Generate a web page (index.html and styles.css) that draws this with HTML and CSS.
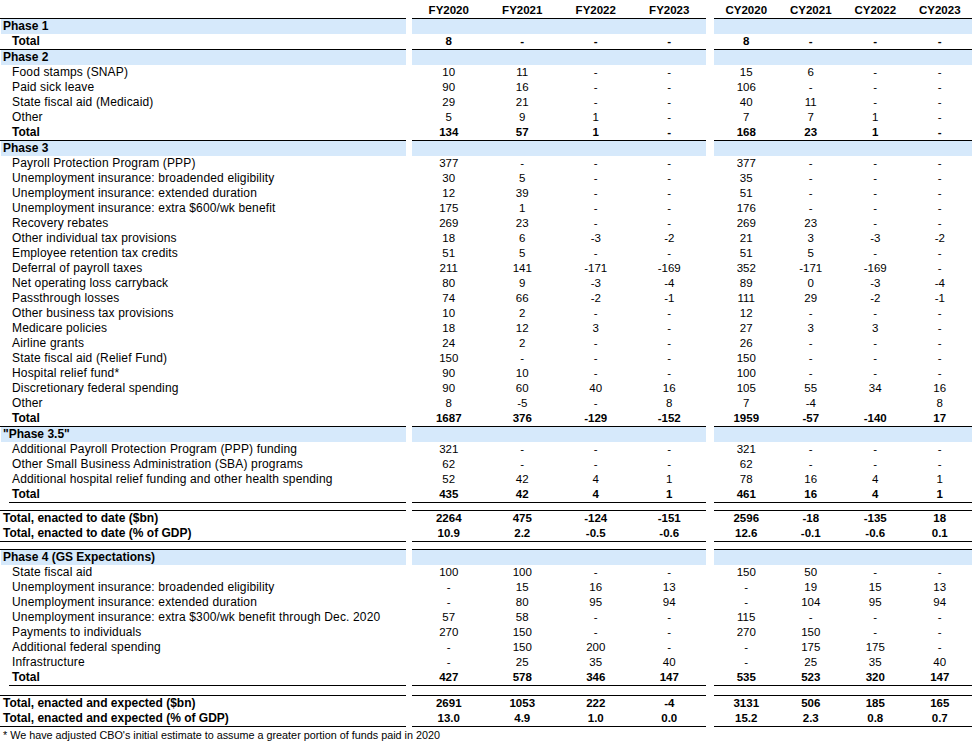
FILE: index.html
```html
<!DOCTYPE html>
<html>
<head>
<meta charset="utf-8">
<link rel="stylesheet" href="styles.css">
</head>
<body>
<table class="fiscal">
  <colgroup>
    <col class="c-ind"><col class="c-lbl"><col class="c-gap1">
    <col class="c-fy"><col class="c-fy"><col class="c-fy"><col class="c-fy">
    <col class="c-gap2">
    <col class="c-cy"><col class="c-cy"><col class="c-cy"><col class="c-cy">
  </colgroup>
  <thead>
    <tr class="head">
      <td class="ind nb"></td><td class="lbl nb"></td><td class="g"></td>
      <td class="n">FY2020</td><td class="n">FY2021</td><td class="n">FY2022</td><td class="n">FY2023</td>
      <td class="g"></td>
      <td class="n">CY2020</td><td class="n">CY2021</td><td class="n">CY2022</td><td class="n">CY2023</td>
    </tr>
  </thead>
  <tbody>
    <tr class="ph first"><td class="phl" colspan="2">Phase 1</td><td class="g"></td><td class="n"></td><td class="n"></td><td class="n"></td><td class="n"></td><td class="g"></td><td class="n"></td><td class="n"></td><td class="n"></td><td class="n"></td></tr>
    <tr class="tot"><td class="ind"></td><td class="lbl">Total</td><td class="g"></td><td class="n">8</td><td class="n">-</td><td class="n">-</td><td class="n">-</td><td class="g"></td><td class="n">8</td><td class="n">-</td><td class="n">-</td><td class="n">-</td></tr>

    <tr class="ph"><td class="phl" colspan="2">Phase 2</td><td class="g"></td><td class="n"></td><td class="n"></td><td class="n"></td><td class="n"></td><td class="g"></td><td class="n"></td><td class="n"></td><td class="n"></td><td class="n"></td></tr>
    <tr><td class="ind"></td><td class="lbl">Food stamps (SNAP)</td><td class="g"></td><td class="n">10</td><td class="n">11</td><td class="n">-</td><td class="n">-</td><td class="g"></td><td class="n">15</td><td class="n">6</td><td class="n">-</td><td class="n">-</td></tr>
    <tr><td class="ind"></td><td class="lbl">Paid sick leave</td><td class="g"></td><td class="n">90</td><td class="n">16</td><td class="n">-</td><td class="n">-</td><td class="g"></td><td class="n">106</td><td class="n">-</td><td class="n">-</td><td class="n">-</td></tr>
    <tr><td class="ind"></td><td class="lbl">State fiscal aid (Medicaid)</td><td class="g"></td><td class="n">29</td><td class="n">21</td><td class="n">-</td><td class="n">-</td><td class="g"></td><td class="n">40</td><td class="n">11</td><td class="n">-</td><td class="n">-</td></tr>
    <tr><td class="ind"></td><td class="lbl">Other</td><td class="g"></td><td class="n">5</td><td class="n">9</td><td class="n">1</td><td class="n">-</td><td class="g"></td><td class="n">7</td><td class="n">7</td><td class="n">1</td><td class="n">-</td></tr>
    <tr class="tot"><td class="ind"></td><td class="lbl">Total</td><td class="g"></td><td class="n">134</td><td class="n">57</td><td class="n">1</td><td class="n">-</td><td class="g"></td><td class="n">168</td><td class="n">23</td><td class="n">1</td><td class="n">-</td></tr>

    <tr class="ph"><td class="phl" colspan="2">Phase 3</td><td class="g"></td><td class="n"></td><td class="n"></td><td class="n"></td><td class="n"></td><td class="g"></td><td class="n"></td><td class="n"></td><td class="n"></td><td class="n"></td></tr>
    <tr><td class="ind"></td><td class="lbl">Payroll Protection Program (PPP)</td><td class="g"></td><td class="n">377</td><td class="n">-</td><td class="n">-</td><td class="n">-</td><td class="g"></td><td class="n">377</td><td class="n">-</td><td class="n">-</td><td class="n">-</td></tr>
    <tr><td class="ind"></td><td class="lbl">Unemployment insurance: broadended eligibility</td><td class="g"></td><td class="n">30</td><td class="n">5</td><td class="n">-</td><td class="n">-</td><td class="g"></td><td class="n">35</td><td class="n">-</td><td class="n">-</td><td class="n">-</td></tr>
    <tr><td class="ind"></td><td class="lbl">Unemployment insurance: extended duration</td><td class="g"></td><td class="n">12</td><td class="n">39</td><td class="n">-</td><td class="n">-</td><td class="g"></td><td class="n">51</td><td class="n">-</td><td class="n">-</td><td class="n">-</td></tr>
    <tr><td class="ind"></td><td class="lbl">Unemployment insurance: extra $600/wk benefit</td><td class="g"></td><td class="n">175</td><td class="n">1</td><td class="n">-</td><td class="n">-</td><td class="g"></td><td class="n">176</td><td class="n">-</td><td class="n">-</td><td class="n">-</td></tr>
    <tr><td class="ind"></td><td class="lbl">Recovery rebates</td><td class="g"></td><td class="n">269</td><td class="n">23</td><td class="n">-</td><td class="n">-</td><td class="g"></td><td class="n">269</td><td class="n">23</td><td class="n">-</td><td class="n">-</td></tr>
    <tr><td class="ind"></td><td class="lbl">Other individual tax provisions</td><td class="g"></td><td class="n">18</td><td class="n">6</td><td class="n">-3</td><td class="n">-2</td><td class="g"></td><td class="n">21</td><td class="n">3</td><td class="n">-3</td><td class="n">-2</td></tr>
    <tr><td class="ind"></td><td class="lbl">Employee retention tax credits</td><td class="g"></td><td class="n">51</td><td class="n">5</td><td class="n">-</td><td class="n">-</td><td class="g"></td><td class="n">51</td><td class="n">5</td><td class="n">-</td><td class="n">-</td></tr>
    <tr><td class="ind"></td><td class="lbl">Deferral of payroll taxes</td><td class="g"></td><td class="n">211</td><td class="n">141</td><td class="n">-171</td><td class="n">-169</td><td class="g"></td><td class="n">352</td><td class="n">-171</td><td class="n">-169</td><td class="n">-</td></tr>
    <tr><td class="ind"></td><td class="lbl">Net operating loss carryback</td><td class="g"></td><td class="n">80</td><td class="n">9</td><td class="n">-3</td><td class="n">-4</td><td class="g"></td><td class="n">89</td><td class="n">0</td><td class="n">-3</td><td class="n">-4</td></tr>
    <tr><td class="ind"></td><td class="lbl">Passthrough losses</td><td class="g"></td><td class="n">74</td><td class="n">66</td><td class="n">-2</td><td class="n">-1</td><td class="g"></td><td class="n">111</td><td class="n">29</td><td class="n">-2</td><td class="n">-1</td></tr>
    <tr><td class="ind"></td><td class="lbl">Other business tax provisions</td><td class="g"></td><td class="n">10</td><td class="n">2</td><td class="n">-</td><td class="n">-</td><td class="g"></td><td class="n">12</td><td class="n">-</td><td class="n">-</td><td class="n">-</td></tr>
    <tr><td class="ind"></td><td class="lbl">Medicare policies</td><td class="g"></td><td class="n">18</td><td class="n">12</td><td class="n">3</td><td class="n">-</td><td class="g"></td><td class="n">27</td><td class="n">3</td><td class="n">3</td><td class="n">-</td></tr>
    <tr><td class="ind"></td><td class="lbl">Airline grants</td><td class="g"></td><td class="n">24</td><td class="n">2</td><td class="n">-</td><td class="n">-</td><td class="g"></td><td class="n">26</td><td class="n">-</td><td class="n">-</td><td class="n">-</td></tr>
    <tr><td class="ind"></td><td class="lbl">State fiscal aid (Relief Fund)</td><td class="g"></td><td class="n">150</td><td class="n">-</td><td class="n">-</td><td class="n">-</td><td class="g"></td><td class="n">150</td><td class="n">-</td><td class="n">-</td><td class="n">-</td></tr>
    <tr><td class="ind"></td><td class="lbl">Hospital relief fund*</td><td class="g"></td><td class="n">90</td><td class="n">10</td><td class="n">-</td><td class="n">-</td><td class="g"></td><td class="n">100</td><td class="n">-</td><td class="n">-</td><td class="n">-</td></tr>
    <tr><td class="ind"></td><td class="lbl">Discretionary federal spending</td><td class="g"></td><td class="n">90</td><td class="n">60</td><td class="n">40</td><td class="n">16</td><td class="g"></td><td class="n">105</td><td class="n">55</td><td class="n">34</td><td class="n">16</td></tr>
    <tr><td class="ind"></td><td class="lbl">Other</td><td class="g"></td><td class="n">8</td><td class="n">-5</td><td class="n">-</td><td class="n">8</td><td class="g"></td><td class="n">7</td><td class="n">-4</td><td class="n"></td><td class="n">8</td></tr>
    <tr class="tot"><td class="ind"></td><td class="lbl">Total</td><td class="g"></td><td class="n">1687</td><td class="n">376</td><td class="n">-129</td><td class="n">-152</td><td class="g"></td><td class="n">1959</td><td class="n">-57</td><td class="n">-140</td><td class="n">17</td></tr>

    <tr class="ph"><td class="phl" colspan="2">"Phase 3.5"</td><td class="g"></td><td class="n"></td><td class="n"></td><td class="n"></td><td class="n"></td><td class="g"></td><td class="n"></td><td class="n"></td><td class="n"></td><td class="n"></td></tr>
    <tr><td class="ind"></td><td class="lbl">Additional Payroll Protection Program (PPP) funding</td><td class="g"></td><td class="n">321</td><td class="n">-</td><td class="n">-</td><td class="n">-</td><td class="g"></td><td class="n">321</td><td class="n">-</td><td class="n">-</td><td class="n">-</td></tr>
    <tr><td class="ind"></td><td class="lbl">Other Small Business Administration (SBA) programs</td><td class="g"></td><td class="n">62</td><td class="n">-</td><td class="n">-</td><td class="n">-</td><td class="g"></td><td class="n">62</td><td class="n">-</td><td class="n">-</td><td class="n">-</td></tr>
    <tr><td class="ind"></td><td class="lbl">Additional hospital relief funding and other health spending</td><td class="g"></td><td class="n">52</td><td class="n">42</td><td class="n">4</td><td class="n">1</td><td class="g"></td><td class="n">78</td><td class="n">16</td><td class="n">4</td><td class="n">1</td></tr>
    <tr class="tot rule-below"><td class="ind"></td><td class="lbl">Total</td><td class="g"></td><td class="n">435</td><td class="n">42</td><td class="n">4</td><td class="n">1</td><td class="g"></td><td class="n">461</td><td class="n">16</td><td class="n">4</td><td class="n">1</td></tr>
    <tr class="sp"><td></td><td></td><td></td><td></td><td></td><td></td><td></td><td></td><td></td><td></td><td></td><td></td></tr>

    <tr class="sum ruled"><td class="phl" colspan="2">Total, enacted to date ($bn)</td><td class="g"></td><td class="n">2264</td><td class="n">475</td><td class="n">-124</td><td class="n">-151</td><td class="g"></td><td class="n">2596</td><td class="n">-18</td><td class="n">-135</td><td class="n">18</td></tr>
    <tr class="sum rule-below"><td class="phl" colspan="2">Total, enacted to date (% of GDP)</td><td class="g"></td><td class="n">10.9</td><td class="n">2.2</td><td class="n">-0.5</td><td class="n">-0.6</td><td class="g"></td><td class="n">12.6</td><td class="n">-0.1</td><td class="n">-0.6</td><td class="n">0.1</td></tr>
    <tr class="sp"><td></td><td></td><td></td><td></td><td></td><td></td><td></td><td></td><td></td><td></td><td></td><td></td></tr>

    <tr class="ph"><td class="phl" colspan="2">Phase 4 (GS Expectations)</td><td class="g"></td><td class="n"></td><td class="n"></td><td class="n"></td><td class="n"></td><td class="g"></td><td class="n"></td><td class="n"></td><td class="n"></td><td class="n"></td></tr>
    <tr><td class="ind"></td><td class="lbl">State fiscal aid</td><td class="g"></td><td class="n">100</td><td class="n">100</td><td class="n">-</td><td class="n">-</td><td class="g"></td><td class="n">150</td><td class="n">50</td><td class="n">-</td><td class="n">-</td></tr>
    <tr><td class="ind"></td><td class="lbl">Unemployment insurance: broadended eligibility</td><td class="g"></td><td class="n">-</td><td class="n">15</td><td class="n">16</td><td class="n">13</td><td class="g"></td><td class="n">-</td><td class="n">19</td><td class="n">15</td><td class="n">13</td></tr>
    <tr><td class="ind"></td><td class="lbl">Unemployment insurance: extended duration</td><td class="g"></td><td class="n">-</td><td class="n">80</td><td class="n">95</td><td class="n">94</td><td class="g"></td><td class="n">-</td><td class="n">104</td><td class="n">95</td><td class="n">94</td></tr>
    <tr><td class="ind"></td><td class="lbl">Unemployment insurance: extra $300/wk benefit through Dec. 2020</td><td class="g"></td><td class="n">57</td><td class="n">58</td><td class="n">-</td><td class="n">-</td><td class="g"></td><td class="n">115</td><td class="n">-</td><td class="n">-</td><td class="n">-</td></tr>
    <tr><td class="ind"></td><td class="lbl">Payments to individuals</td><td class="g"></td><td class="n">270</td><td class="n">150</td><td class="n">-</td><td class="n">-</td><td class="g"></td><td class="n">270</td><td class="n">150</td><td class="n">-</td><td class="n">-</td></tr>
    <tr><td class="ind"></td><td class="lbl">Additional federal spending</td><td class="g"></td><td class="n">-</td><td class="n">150</td><td class="n">200</td><td class="n">-</td><td class="g"></td><td class="n">-</td><td class="n">175</td><td class="n">175</td><td class="n">-</td></tr>
    <tr><td class="ind"></td><td class="lbl">Infrastructure</td><td class="g"></td><td class="n">-</td><td class="n">25</td><td class="n">35</td><td class="n">40</td><td class="g"></td><td class="n">-</td><td class="n">25</td><td class="n">35</td><td class="n">40</td></tr>
    <tr class="tot rule-below"><td class="ind"></td><td class="lbl">Total</td><td class="g"></td><td class="n">427</td><td class="n">578</td><td class="n">346</td><td class="n">147</td><td class="g"></td><td class="n">535</td><td class="n">523</td><td class="n">320</td><td class="n">147</td></tr>
    <tr class="sp sp-tall"><td></td><td></td><td></td><td></td><td></td><td></td><td></td><td></td><td></td><td></td><td></td><td></td></tr>

    <tr class="sum ruled"><td class="phl" colspan="2">Total, enacted and expected ($bn)</td><td class="g"></td><td class="n">2691</td><td class="n">1053</td><td class="n">222</td><td class="n">-4</td><td class="g"></td><td class="n">3131</td><td class="n">506</td><td class="n">185</td><td class="n">165</td></tr>
    <tr class="sum rule-below"><td class="phl" colspan="2">Total, enacted and expected (% of GDP)</td><td class="g"></td><td class="n">13.0</td><td class="n">4.9</td><td class="n">1.0</td><td class="n">0.0</td><td class="g"></td><td class="n">15.2</td><td class="n">2.3</td><td class="n">0.8</td><td class="n">0.7</td></tr>
  </tbody>
</table>
<p class="note">* We have adjusted CBO's initial estimate to assume a greater portion of funds paid in 2020</p>
</body>
</html>
```

FILE: styles.css
```css
html, body {
  margin: 0;
  padding: 0;
  background: #fff;
}
body {
  font-family: "Liberation Sans", Arial, sans-serif;
  font-size: 11.5px;
  color: #000;
}
.fiscal {
  width: 972px;
  table-layout: fixed;
  border-collapse: separate;
  border-spacing: 0;
}
.c-ind { width: 9px; }
.c-lbl { width: 397px; }
.c-gap1 { width: 6px; }
.c-fy { width: 73.5px; }
.c-gap2 { width: 8px; }
.c-cy { width: 64.5px; }

.fiscal td {
  padding: 0;
  line-height: 15px;
  height: 15px;
  white-space: nowrap;
  overflow: visible;
  vertical-align: middle;
}
.fiscal td.n { text-align: center; }
.fiscal td.lbl {
  padding-left: 3px;
  font-size: 12px;
  letter-spacing: 0.15px;
}
.fiscal .tot td.lbl { letter-spacing: 0; }
.fiscal td.phl {
  padding-left: 3px;
  font-size: 12px;
}

/* header */
.head td {
  height: 18px;
  vertical-align: bottom;
  font-weight: bold;
  padding-bottom: 0;
}
.head td.n,
.head td.nb {
  border-bottom: 1px solid #000;
}

/* phase headings */
.ph td.phl,
.ph td.n {
  background: #d6e9fb;
  font-weight: bold;
}
.ph td.phl { box-shadow: inset 1px 0 0 #fff; }
.ph:not(.first) td.phl,
.ph:not(.first) td.n {
  border-top: 1px solid #000;
}

/* totals */
.tot td { font-weight: bold; }
.rule-below td.lbl,
.rule-below td.phl,
.rule-below td.n {
  border-bottom: 1px solid #000;
}

/* summary rows */
.sum td { font-weight: bold; }
.ruled td.phl,
.ruled td.n {
  border-top: 1px solid #000;
}

/* spacer rows */
.sp td {
  height: 7px;
  line-height: 0;
  font-size: 0;
}
.sp-tall td { height: 9px; }

.note {
  margin: 0;
  padding: 1px 0 0 3px;
  line-height: 15px;
  font-size: 10.8px;
}
```
